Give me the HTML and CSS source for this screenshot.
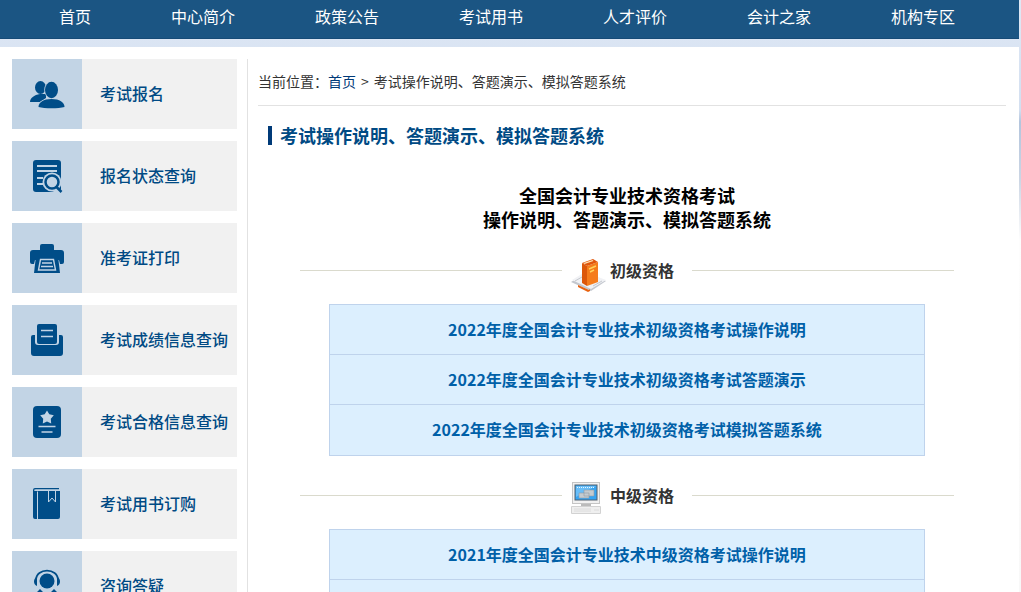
FILE: index.html
```html
<!DOCTYPE html>
<html lang="zh-CN">
<head>
<meta charset="utf-8">
<title>考试操作说明、答题演示、模拟答题系统</title>
<meta name="viewport" content="width=device-width, initial-scale=1">
<link rel="stylesheet" href="styles.css">
</head>
<body>
<div class="page">
  <nav class="topnav">
    <a href="#">首页</a>
    <a href="#">中心简介</a>
    <a href="#">政策公告</a>
    <a href="#">考试用书</a>
    <a href="#">人才评价</a>
    <a href="#">会计之家</a>
    <a href="#">机构专区</a>
  </nav>
  <div class="content">
    <aside class="sidebar">
      <a class="side-item" href="#">
        <span class="side-icon"><svg viewBox="0 0 36 36" aria-hidden="true"><ellipse cx="11.500" cy="11.500" rx="5.500" ry="6.500"/><path d="M1 26c0-4 4-7 10-8h6v4l-6 4z"/><g class="halo"><path d="M9.500 31c0-4.500 5-8 13-8s13 3.500 13 8c-6 1.800-20 1.800-26 0z"/><ellipse cx="22.500" cy="14" rx="6.500" ry="8.200"/></g></svg></span>
        <span class="side-label">考试报名</span>
      </a>
      <a class="side-item" href="#">
        <span class="side-icon"><svg viewBox="0 0 36 36" aria-hidden="true"><rect x="4" y="2" width="28" height="32" rx="3"/><path class="cut" d="M8 8h20M8 13h20M8 20h6M8 26h6"/><circle class="mask" cx="23" cy="24" r="9.500"/><path class="mask" d="M26 27l8 7-3 3-8-4z"/><circle class="ring" cx="23" cy="24" r="6.500"/><path class="ring" d="M27.500 29l5 5"/></svg></span>
        <span class="side-label">报名状态查询</span>
      </a>
      <a class="side-item" href="#">
        <span class="side-icon"><svg viewBox="0 0 36 36" aria-hidden="true"><path d="M13 4h10q2 0 2 2v4H11V6q0-2 2-2z"/><path d="M4 10h28q3 0 3 3v9q0 2-2 2h-2l-1-4H6l-1 4H3q-2 0-2-2v-9q0-3 3-3z"/><path d="M7 16h22l2 17H5z"/><path class="line" d="M11.500 19.500h13l2 10.500h-17zM13 23h10M12 26.500h12"/></svg></span>
        <span class="side-label">准考证打印</span>
      </a>
      <a class="side-item" href="#">
        <span class="side-icon"><svg viewBox="0 0 36 36" aria-hidden="true"><path d="M2 15q0-2 2-2h2v7q0 3 3 3h18q3 0 3-3v-7h2q2 0 2 2v16q0 3-3 3H5q-3 0-3-3z"/><path d="M10 2h16q2 0 2 2v16q0 2-2 2H10q-2 0-2-2V4q0-2 2-2z"/><path class="line" d="M12 8.500h12M12 14.500h12"/></svg></span>
        <span class="side-label">考试成绩信息查询</span>
      </a>
      <a class="side-item" href="#">
        <span class="side-icon"><svg viewBox="0 0 36 36" aria-hidden="true"><rect x="4" y="2" width="28" height="32" rx="4"/><path class="mask" d="M18 6.500l2.300 3.800 4.500 1-3 3.400.4 4.700-4.200-1.800-4.200 1.800.4-4.700-3-3.400 4.500-1z"/><path class="line" d="M9.500 22.500h17M12.500 28h11"/></svg></span>
        <span class="side-label">考试合格信息查询</span>
      </a>
      <a class="side-item" href="#">
        <span class="side-icon"><svg viewBox="0 0 36 36" aria-hidden="true"><path d="M6 2h24v1.200H7q-2 0-2 1t2 .8h24v26q0 2-2 2H6q-2 0-2-2V4q0-2 2-2z"/><path class="thin" d="M8.500 5.500V33M19.500 5v11l3.500-4 3.500 4V5"/></svg></span>
        <span class="side-label">考试用书订购</span>
      </a>
      <a class="side-item" href="#">
        <span class="side-icon"><svg viewBox="0 0 36 36" aria-hidden="true"><circle cx="18" cy="13" r="7.500"/><path class="arc" d="M7 12C7 -.5 29 -.5 29 12"/><path d="M8 9v9c-4-1-4-8 0-9zM28 9v9c4-1 4-8 0-9zM7 25l4-4 3 3h8l3-3 4 4q3 2 4 9H3q1-7 4-9z"/></svg></span>
        <span class="side-label">咨询答疑</span>
      </a>
    </aside>
    <main class="main">
      <div class="crumbs">当前位置：<a href="#">首页</a><span class="sep">&gt;</span>考试操作说明、答题演示、模拟答题系统</div>
      <h2 class="title">考试操作说明、答题演示、模拟答题系统</h2>
      <h1 class="headline">全国会计专业技术资格考试<br>操作说明、答题演示、模拟答题系统</h1>
      <section class="level">
        <h3 class="legend"><span class="legend-body"><svg viewBox="0 -6 36 42" aria-hidden="true"><path fill="#c3c7ce" d="M0 27l13-8 22 7-15 10z"/><path fill="#f1f2f5" d="M1 25l13-8 21 8-15 9z"/><path stroke="#c3c7ce" fill="none" d="M4 26l7-4M22 31l9-5"/><path fill="#e8620f" d="M7 30l11 5 1-1v2l-2 1-10-5z"/><path fill="#dc570a" d="M11 8l5 3v20l-5-3z"/><path fill="#f57c1c" d="M16 11l11-4v20l-11 4z"/><path fill="#e0560c" d="M11 8l11-4 5 3-11 4z"/><path fill="#ffe2b5" d="M12.500 8l9-3 1 1-9 3z"/><path stroke="#ffd25a" stroke-width="1.500" d="M18 14l7-3M19 17l4-2"/></svg>初级资格</span></h3>
        <ul class="links">
          <li><a href="#">2022年度全国会计专业技术初级资格考试操作说明</a></li>
          <li><a href="#">2022年度全国会计专业技术初级资格考试答题演示</a></li>
          <li><a href="#">2022年度全国会计专业技术初级资格考试模拟答题系统</a></li>
        </ul>
      </section>
      <section class="level">
        <h3 class="legend"><span class="legend-body"><svg viewBox="0 -6 36 42" aria-hidden="true"><rect x="1.500" y="2.500" width="27" height="21" fill="#f1f1f1" stroke="#c5c5c5"/><rect x="4" y="5" width="22" height="15" fill="#35a4f2" stroke="#52616e"/><path fill="#9bd8ff" d="M5 6h20L5 17z" opacity=".5"/><path stroke="#e7f7ff" stroke-dasharray="1 1" d="M6 7.500h18"/><path fill="#c3cbd0" stroke="#929ca3" stroke-width=".6" d="M13 10h10v6H13zM8 13h10v5H8z"/><path fill="#bbb" d="M10 24h10v2H10z"/><path fill="#efefef" stroke="#d2d2d2" d="M.5 26.500h29v7H.5z"/><path stroke="#dcdcdc" fill="none" d="M3 29h17M3 31h17M23 30h5"/></svg>中级资格</span></h3>
        <ul class="links">
          <li><a href="#">2021年度全国会计专业技术中级资格考试操作说明</a></li>
          <li class="blank"></li>
        </ul>
      </section>
    </main>
  </div>
</div>
</body>
</html>
```
FILE: styles.css
```css
* { box-sizing: border-box; }

html {
  height: 100%;
  overflow: hidden;
}

body {
  height: 100%;
  margin: 0;
  padding-right: 2px;
  overflow: hidden;
  background: linear-gradient(#dfe8f5, #d3dff0 110px, #b3c5dd 122px, #ccd6e4 180px, #fdfdfd 240px, #f8f8f8);
  font-family: "Noto Sans CJK SC", sans-serif;
  font-size: 16px;
}

a { text-decoration: none; }

.topnav {
  display: flex;
  height: 39px;
  padding-left: 19px;
  background: #1b5583;
  border-bottom: 1px solid #164b77;
}

.topnav a {
  padding: 0 40px;
  color: #fff;
  line-height: 32px;
  white-space: nowrap;
}

.content {
  display: flex;
  gap: 10px;
  margin-top: 8px;
  padding: 12px 13px 0 12px;
  background: #fff;
}

.sidebar {
  display: flex;
  flex-direction: column;
  flex: 0 0 225px;
  gap: 12px;
}

.side-item {
  display: flex;
  height: 70px;
  background: #f1f1f1;
  color: #004a84;
}

.side-icon {
  display: flex;
  flex: 0 0 70px;
  align-items: center;
  justify-content: center;
  background: #c2d4e5;
}

.side-icon svg {
  width: 36px;
  height: 36px;
  fill: #004d88;
}

.side-icon .halo {
  stroke: #c2d4e5;
  stroke-width: 1.5;
  paint-order: stroke;
}

.side-icon .mask { fill: #c2d4e5; }

.side-icon .cut,
.side-icon .line,
.side-icon .thin {
  fill: none;
  stroke: #c2d4e5;
  stroke-width: 2;
}

.side-icon .line { stroke-width: 1.4; }
.side-icon .thin { stroke-width: 1; }

.side-icon .ring {
  fill: none;
  stroke: #004d88;
  stroke-width: 2.5;
}

.side-icon .arc {
  fill: none;
  stroke: #004d88;
  stroke-width: 1.8;
}

.side-label {
  padding-left: 18px;
  font-weight: 500;
  line-height: 68px;
  white-space: nowrap;
}

.main {
  flex: 1;
  min-width: 0;
  padding-left: 10px;
  border-left: 1px solid #e2e2e2;
}

.crumbs {
  height: 47px;
  border-bottom: 1px solid #e2e2e2;
  color: #333;
  font-size: 14px;
  line-height: 44px;
}

.crumbs a { color: #003a78; }
.sep { padding: 0 5px; }

.title {
  display: flex;
  align-items: center;
  gap: 8px;
  margin: 17px 0 0 10px;
  color: #004a84;
  font-size: 18px;
  line-height: 24px;
}

.title::before {
  width: 4px;
  height: 19px;
  background: #003a78;
  content: "";
}

.headline {
  margin: 36px 10px 0 0;
  font-size: 18px;
  line-height: 24px;
  text-align: center;
}

.level { margin: 21px 52px 0 42px; }

.legend {
  display: flex;
  align-items: center;
  height: 36px;
  margin: 0;
  color: #333;
  font-size: 16px;
}

.legend::before,
.legend::after {
  flex: 1;
  height: 1px;
  background: #dadacd;
  content: "";
}

.legend-body {
  display: flex;
  align-items: center;
  gap: 3px;
  padding: 0 18px 0 9px;
}

.legend svg {
  width: 36px;
  height: 42px;
  overflow: visible;
}

.links {
  margin: 16px 29px 0;
  padding: 0 0 1px;
  border: 1px solid #bfd3ec;
  background: #dceffe;
  list-style: none;
}

.links li + li { border-top: 1px solid #bfd3ec; }
.links .blank { height: 50px; }

.links a {
  display: block;
  color: #0060a8;
  font-weight: 700;
  line-height: 49px;
  text-align: center;
}
```
